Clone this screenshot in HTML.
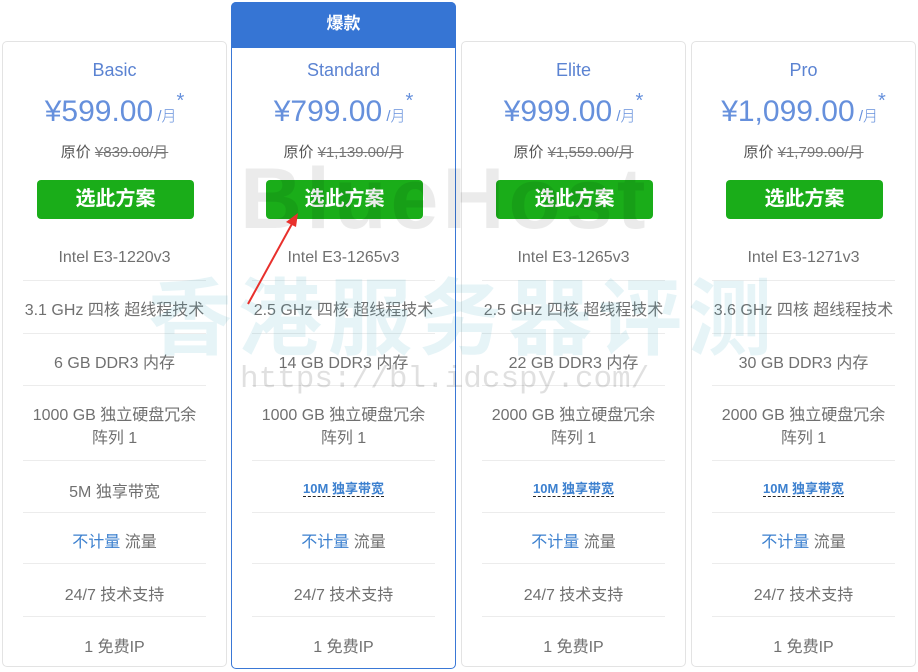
<!DOCTYPE html><html><head><meta charset="utf-8"><style>
body{margin:0;width:918px;height:672px;background:#fff;position:relative;overflow:hidden;font-family:"Liberation Sans","Noto Sans CJK SC",sans-serif;}
.card{position:absolute;top:41px;width:225px;height:626px;border:1px solid #e3e3e3;border-radius:5px;box-sizing:border-box;background:#fff}
.feat{top:2px;height:667px;border:1px solid #3a78d6}
.hd{position:absolute;left:-1px;top:-1px;right:-1px;height:46px;background:#3675d4;border-radius:5px 5px 0 0;color:#fff;font-weight:bold;font-size:17px;text-align:center;line-height:44px}
.t{position:absolute;left:0;width:100%;text-align:center;color:#707070;font-size:16px;white-space:nowrap}
.nm{color:#5b83d2;font-size:18px}
.pr{color:#6690dc;font-size:30px;font-weight:300}
.pr small{font-size:15px}
.pr sup{font-size:20px;vertical-align:14px}
.og{font-size:15px;color:#555}
.og s{color:#777}
.btn{position:absolute;left:34px;width:157px;height:39px;background:#1aad19;border-radius:4px;color:#fff;font-weight:bold;font-size:20px;text-align:center;line-height:39px}
.ln{position:absolute;left:20px;right:20px;height:1px;background:#ececec}
.bl{color:#3c80cf}
.dl{font-size:13px;color:#3c80cf;border-bottom:1px dashed #222;font-weight:bold}
.wm{position:absolute;pointer-events:none;white-space:nowrap}
</style></head><body>

<div id="c"></div>
<script>
var d=[["Basic","599.00","839.00","1220v3","3.1","6","1000","5M 独享带宽",0],
["Standard","799.00","1,139.00","1265v3","2.5","14","1000","10M",1],
["Elite","999.00","1,559.00","1265v3","2.5","22","2000","10M",0],
["Pro","1,099.00","1,799.00","1271v3","3.6","30","2000","10M",0]];
var xs=[2,231,461,691],h="";
d.forEach(function(c,i){
 var off=c[8]?39:0;
 h+='<div class="card'+(c[8]?' feat':'')+'" style="left:'+xs[i]+'px">'+(c[8]?'<div class="hd">爆款</div>':'');
 function T(y,s,cl){h+='<div class="t '+(cl||'')+'" style="top:'+(y+off-41)+'px">'+s+'</div>';}
 T(59,c[0],'nm');
 T(89,'¥'+c[1]+'<small> /月</small><sup>*</sup>','pr');
 T(140,'原价 <s>¥'+c[2]+'/月</s>','og');
 h+='<div class="btn" style="top:'+(179+off-41)+'px">选此方案</div>';
 T(248,'Intel E3-'+c[3]);
 T(295,c[4]+' GHz 四核 超线程技术');
 T(348,c[5]+' GB DDR3 内存');
 T(400,c[6]+' GB 独立硬盘冗余');
 T(423,'阵列 1');
 T(477,c[7]=='10M'?'<span class="dl">10M 独享带宽</span>':c[7]);
 T(527,'<span class="bl">不计量</span> 流量');
 T(580,'24/7 技术支持');
 T(632,'1 免费IP');
 [279,332,384,459,511,562,615].forEach(function(y){h+='<div class="ln" style="top:'+(y+off-41)+'px"></div>';});
 h+='</div>';
});
document.getElementById('c').innerHTML=h;
</script>
<div class="wm" style="left:240px;top:150px;font-size:86px;font-weight:bold;color:rgba(0,0,0,0.08);letter-spacing:4px">BlueHost</div>
<div class="wm" style="left:148px;top:252px;font-size:84px;font-weight:bold;color:rgba(60,170,190,0.13);letter-spacing:6px">香港服务器评测</div>
<div class="wm" style="left:240px;top:362px;font-size:31px;font-family:'Liberation Mono',monospace;color:rgba(0,0,0,0.12)">https://bl.idcspy.com/</div>
<svg style="position:absolute;left:0;top:0" width="918" height="672"><line x1="248" y1="304" x2="293" y2="222" stroke="#e8302c" stroke-width="2"/><polygon points="298,213 286,222 296,227" fill="#e8302c"/></svg>
</body></html>
